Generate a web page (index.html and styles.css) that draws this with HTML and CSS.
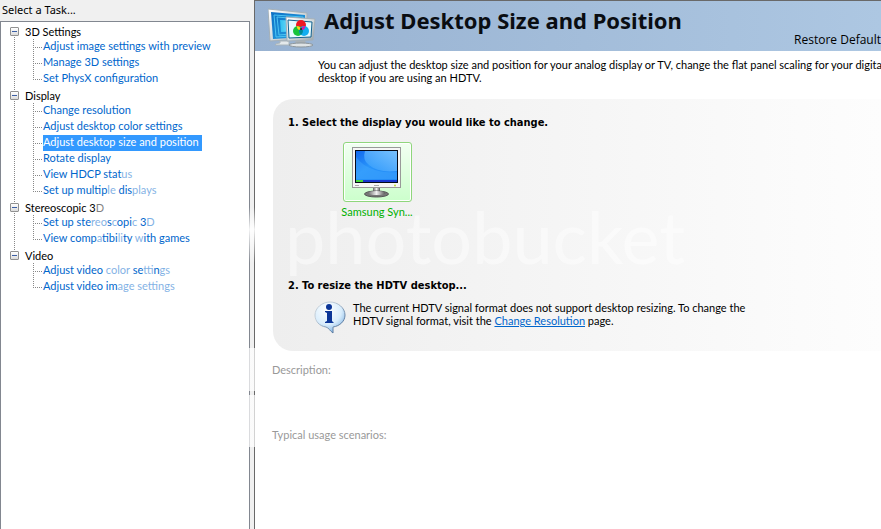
FILE: index.html
```html
<!DOCTYPE html>
<html lang="en">
<head>
<meta charset="utf-8">
<title>Adjust Desktop Size and Position</title>
<link rel="stylesheet" href="styles.css">
</head>
<body>
<div class="app">
  <nav class="sidebar" aria-labelledby="task-title">
    <h2 class="sidebar-title" id="task-title">Select a Task...</h2>
    <ul class="tree">
      <li class="group">
        <div class="group-row"><button class="toggle" aria-label="Collapse 3D Settings"></button>3D Settings</div>
        <ul class="tasks">
          <li><a href="#">Adjust image settings with preview</a></li>
          <li><a href="#">Manage 3D settings</a></li>
          <li><a href="#">Set PhysX configuration</a></li>
        </ul>
      </li>
      <li class="group">
        <div class="group-row"><button class="toggle" aria-label="Collapse Display"></button>Display</div>
        <ul class="tasks">
          <li><a href="#">Change resolution</a></li>
          <li><a href="#">Adjust desktop color settings</a></li>
          <li><a href="#" class="selected" aria-current="page">Adjust desktop size and position</a></li>
          <li><a href="#">Rotate display</a></li>
          <li><a href="#">View HDCP stat<span class="faded">us</span></a></li>
          <li><a href="#">Set up multip<span class="faded">le</span> dis<span class="faded">plays</span></a></li>
        </ul>
      </li>
      <li class="group">
        <div class="group-row"><button class="toggle" aria-label="Collapse Stereoscopic 3D"></button>Stereoscopic 3<span class="faded">D</span></div>
        <ul class="tasks">
          <li><a href="#">Set up ste<span class="faded">reo</span>s<span class="faded">c</span>opi<span class="faded">c</span> 3<span class="faded">D</span></a></li>
          <li><a href="#">View comp<span class="faded">a</span>tibi<span class="faded">li</span>ty <span class="faded">w</span>ith games</a></li>
        </ul>
      </li>
      <li class="group">
        <div class="group-row"><button class="toggle" aria-label="Collapse Video"></button>Video</div>
        <ul class="tasks">
          <li><a href="#">Adjust video <span class="faded">color</span> se<span class="faded">tt</span>in<span class="faded">gs</span></a></li>
          <li><a href="#">Adjust video im<span class="faded">age settings</span></a></li>
        </ul>
      </li>
    </ul>
  </nav>
  <div class="splitter"></div>
  <main class="content">
    <header class="banner">
      <svg class="banner-icon" width="48" height="40" viewBox="0 0 48 40" aria-hidden="true">
        <defs>
          <linearGradient id="frame" x1="0" y1="0" x2="1" y2="1"><stop offset="0" stop-color="#fff"/><stop offset=".5" stop-color="#d6dcdf"/><stop offset="1" stop-color="#9aa4aa"/></linearGradient>
          <linearGradient id="blue" x1="0" y1="0" x2="1" y2="1"><stop offset="0" stop-color="#0c6fc4"/><stop offset="1" stop-color="#2aa5e4"/></linearGradient>
          <linearGradient id="cyan" x1="0" y1="0" x2="1" y2="0"><stop offset="0" stop-color="#2fc0f0"/><stop offset="1" stop-color="#b6f5ff"/></linearGradient>
        </defs>
        <path d="M0 1 39 5V31L2 33Z" fill="url(#frame)" stroke="#a4b0b8"/>
        <path d="M3 4 37 7V29L5 31Z" fill="url(#blue)"/>
        <path d="M6 7 35 9V27L8 29Z" fill="none" stroke="#4cc4f2"/>
        <path d="M9 9 33 11V25L11 27Z" fill="none" stroke="#4cc4f2"/>
        <path d="M12 12 31 13V23L13 24Z" fill="url(#cyan)"/>
        <path d="M12 33H21V37H7Q8 35 12 35Z" fill="#e4e9eb" stroke="#a9b4ba"/>
        <path d="M28 32H37L38 36H27Z" fill="#a9b0b4"/>
        <ellipse cx="33" cy="37" rx="12" ry="2" fill="#dfe4e6" stroke="#8c969c"/>
        <path d="M18 9 47 11 45 32 19 33Z" fill="url(#frame)" stroke="#a4b0b8"/>
        <path d="M20 12 44 14 43 29 21 30Z" fill="#e6fbff" stroke="#12618f"/>
        <circle cx="33" cy="17" r="5" fill="#f01822"/>
        <circle cx="30" cy="23" r="5" fill="#15c43b"/>
        <circle cx="36" cy="23" r="5" fill="#12aef0"/>
        <path d="M33 19A5 5 0 0 1 33 27 5 5 0 0 1 33 19Z" fill="#008996"/>
        <path d="M28.500 18Q32 18 33 21L31 22Q29 21 28.500 18Z" fill="#ffd31c"/>
        <path d="M37.500 18Q34 18 33 21L35 22Q37 21 37.500 18Z" fill="#d41aaf"/>
        <circle cx="33" cy="21" r="1" fill="#222"/>
      </svg>
      <h1>Adjust Desktop Size and Position</h1>
      <a class="restore" href="#">Restore Default</a>
    </header>
    <p class="intro">You can adjust the desktop size and position for your analog display or TV, change the flat panel scaling for your digital<br>desktop if you are using an HDTV.</p>
    <div class="panel">
      <div class="watermark" aria-hidden="true">photobucket</div>
      <section class="step step-display">
        <h2>1. Select the display you would like to change.</h2>
        <button class="display">
          <span class="display-frame">
            <svg width="50" height="52" viewBox="0 0 50 52" aria-hidden="true">
              <defs>
                <linearGradient id="screen" x1="0" y1="0" x2="1" y2="1"><stop offset="0" stop-color="#1268ee"/><stop offset=".4" stop-color="#2894fa"/><stop offset="1" stop-color="#2087f6"/></linearGradient>
                <linearGradient id="glow" x1="0" y1="1" x2="1" y2="0"><stop offset="0" stop-color="#2d9afc"/><stop offset="1" stop-color="#8bcbff"/></linearGradient>
                <linearGradient id="stand" x1="0" y1="0" x2="1" y2="0"><stop offset="0" stop-color="#666"/><stop offset=".5" stop-color="#f0f0f0"/><stop offset="1" stop-color="#555"/></linearGradient>
              </defs>
              <rect x=".5" y=".5" width="48" height="40" fill="#f6f6f6" stroke="#999"/>
              <rect x="3" y="3" width="43" height="33" fill="#050a18"/>
              <rect x="4" y="4" width="41" height="31" fill="url(#screen)"/>
              <path d="M13 4H45V24Q26 26 17 18 10 13 13 4Z" fill="url(#glow)" opacity=".8"/>
              <path d="M4 10Q17 27 45 25V32H4Z" fill="#48acff" opacity=".4"/>
              <rect x="4" y="33" width="41" height="2" fill="#1735d0"/>
              <rect x="4" y="33" width="7" height="2" fill="#46d63b"/>
              <path d="M3 38.500H7M22 38.500H27" stroke="#aaa"/>
              <circle cx="43" cy="38.500" r="1" fill="#b7dc31"/>
              <path d="M21 41H28V46H21Z" fill="url(#stand)"/>
              <ellipse cx="24.500" cy="47" rx="12" ry="3" fill="#777" stroke="#555"/>
              <ellipse cx="24.500" cy="46" rx="9" ry="2" fill="url(#stand)"/>
            </svg>
          </span>
          <span>Samsung Syn...</span>
        </button>
      </section>
      <section class="step">
        <h2>2. To resize the HDTV desktop...</h2>
        <div class="notice">
          <svg width="32" height="34" viewBox="0 0 32 34" aria-hidden="true">
            <defs>
              <radialGradient id="bubble" cx=".4" cy=".25" r=".8"><stop offset="0" stop-color="#fff"/><stop offset=".6" stop-color="#d9edfc"/><stop offset="1" stop-color="#78aee1"/></radialGradient>
              <linearGradient id="rim" x1="0" y1="0" x2="1" y2="1"><stop offset=".3" stop-color="#c3ced8"/><stop offset="1" stop-color="#2c5688"/></linearGradient>
            </defs>
            <path d="M16 1C8 1 1 7 1 14c0 6 4 11 11 12 3 1 4 4 7 6V26c7-1 12-6 12-12C31 7 24 1 16 1Z" fill="url(#bubble)" stroke="url(#rim)"/>
            <circle cx="15" cy="6" r="3" fill="#0b3698"/>
            <path d="M11 10H18V20L20 22H11V21L13 20V12L11 11Z" fill="#0b3698"/>
          </svg>
          <p>The current HDTV signal format does not support desktop resizing. To change the<br>HDTV signal format, visit the <a href="#">Change Resolution</a> page.</p>
        </div>
      </section>
    </div>
    <div class="details">
      <h3>Description:</h3>
      <h3>Typical usage scenarios:</h3>
    </div>
  </main>
</div>
</body>
</html>
```
FILE: styles.css
```css
* { box-sizing: border-box; }
body {
  margin: 0;
  font: 11px/13px Lato, sans-serif;
  color: #000;
  background: #fff;
}
h1, h2, h3, p, ul { margin: 0; padding: 0; font-size: inherit; }
ul { list-style: none; }
a { color: #0066cc; text-decoration: none; }
button { font: inherit; padding: 0; }

.app { display: flex; min-height: 100vh; overflow: hidden; }

.sidebar {
  flex: 0 0 250px;
  display: flex;
  flex-direction: column;
  background: #f0f0f0;
}
.sidebar-title { padding: 3px 2px 5px; font: 11px/13px "Noto Sans", sans-serif; }
.tree {
  flex: 1;
  padding: 1px 0 0 9px;
  border: 1px solid #828790;
  border-bottom: 0;
  background: #fff;
}
.group {
  background: repeating-linear-gradient(#888 0 1px, transparent 1px 2px) 4px 0 / 1px 100% no-repeat;
}
.group:first-child { background-position: 4px 8px; }
.group:last-child { background-size: 1px 8px; }
.group-row {
  display: flex;
  align-items: center;
  height: 16px;
  white-space: pre;
}
.toggle {
  width: 9px;
  height: 9px;
  margin-right: 6px;
  border: 1px solid #919191;
  border-radius: 1px;
  background: linear-gradient(#3b5fa5, #3b5fa5) center / 5px 1px no-repeat, linear-gradient(#fff, #dcdcdc);
}
.tasks { padding-left: 23px; }
.tasks li {
  display: flex;
  height: 16px;
  background:
    repeating-linear-gradient(#888 0 1px, transparent 1px 2px) 0 0 / 1px 100% no-repeat,
    repeating-linear-gradient(90deg, #888 0 1px, transparent 1px 2px) 0 8px / 9px 1px no-repeat;
}
.tasks li:last-child { background-size: 1px 9px, 9px 1px; }
.tasks a { margin-left: 10px; padding-right: 3px; line-height: 14px; padding-bottom: 2px; white-space: nowrap; }
.tasks .selected { background: #3399ff; color: #fff; }
.faded { opacity: .5; }

.splitter {
  position: relative;
  flex: 0 0 5px;
  background: #f0f0f0;
  border-right: 1px solid #696969;
}
/* Soft highlights across the divider */
.splitter::after {
  content: "";
  position: absolute;
  inset: 0 -1px 0 -1px;
  background:
    linear-gradient(transparent, rgba(255, 255, 255, .9) 40%, transparent) 0 207px / 100% 56px no-repeat,
    linear-gradient(rgba(255, 255, 255, .7), rgba(255, 255, 255, .7)) 0 348px / 100% 43px no-repeat,
    linear-gradient(rgba(255, 255, 255, .7), rgba(255, 255, 255, .7)) 0 395px / 100% 52px no-repeat;
}

.content { flex: 1; min-width: 0; border-top: 1px solid #696969; }
.banner {
  display: flex;
  height: 50px;
  padding-left: 13px;
  background: linear-gradient(90deg, #98b2d1, #adc7e2);
}
.banner-icon { margin-top: 7px; }
.banner h1 {
  margin-left: 8px;
  font: 700 22px/38px "Noto Sans", sans-serif;
  color: #0a0d12;
  white-space: nowrap;
}
.restore {
  margin-left: auto;
  align-self: flex-end;
  font: 12px/22px "Open Sans", sans-serif;
  color: #000;
}
.intro {
  padding: 7px 0 15px 63px;
  white-space: nowrap;
  overflow: hidden;
}
.panel {
  position: relative;
  margin-left: 18px;
  padding: 17px 15px;
  height: 252px;
  border-radius: 20px 0 0 20px;
  background: linear-gradient(90deg, #eee, #fdfdfd);
}
.step { position: relative; }
.step h2 { font: bold 11px/14px "DejaVu Sans Condensed", sans-serif; }
.step-display { height: 163px; }
.display {
  display: flex;
  flex-direction: column;
  align-items: center;
  gap: 3px;
  width: 80px;
  margin: 12px 0 0 49px;
  border: 0;
  background: none;
  color: #00b000;
  white-space: nowrap;
}
.display-frame {
  width: 69px;
  height: 60px;
  padding-top: 4px;
  border: 1px solid #8fd67c;
  border-radius: 3px;
  background: linear-gradient(#f2fff2, #ccffcc);
  box-shadow: inset 0 0 0 1px #fff;
}
.notice { display: flex; gap: 7px; margin: 8px 0 0 26px; }
.notice p { white-space: nowrap; }
.notice a { text-decoration: underline; }
.watermark {
  position: absolute;
  left: 12px;
  top: 95px;
  font: 72px/84px Lato, sans-serif;
  color: rgba(255, 255, 255, .45);
  pointer-events: none;
}
.details { display: grid; gap: 52px; padding: 12px 17px; }
.details h3 { font-weight: 400; color: #999; }
```
